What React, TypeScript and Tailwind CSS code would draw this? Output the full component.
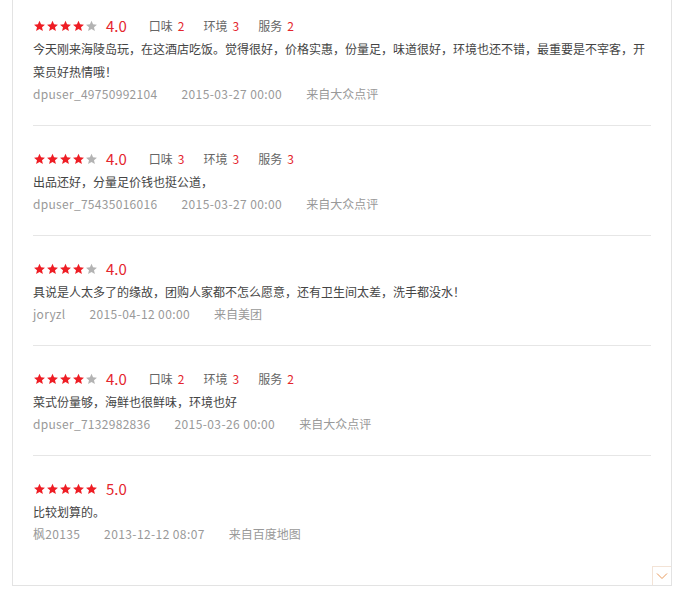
import React from "react";

type Review = {
  score: number;
  taste?: number;
  env?: number;
  service?: number;
  text: string;
  user: string;
  time: string;
  from: string;
};

const reviews: Review[] = [
  {
    score: 4,
    taste: 2,
    env: 3,
    service: 2,
    text: "今天刚来海陵岛玩，在这酒店吃饭。觉得很好，价格实惠，份量足，味道很好，环境也还不错，最重要是不宰客，开菜员好热情哦！",
    user: "dpuser_49750992104",
    time: "2015-03-27 00:00",
    from: "来自大众点评",
  },
  {
    score: 4,
    taste: 3,
    env: 3,
    service: 3,
    text: "出品还好，分量足价钱也挺公道，",
    user: "dpuser_75435016016",
    time: "2015-03-27 00:00",
    from: "来自大众点评",
  },
  {
    score: 4,
    text: "具说是人太多了的缘故，团购人家都不怎么愿意，还有卫生间太差，洗手都没水！",
    user: "joryzl",
    time: "2015-04-12 00:00",
    from: "来自美团",
  },
  {
    score: 4,
    taste: 2,
    env: 3,
    service: 2,
    text: "菜式份量够，海鲜也很鲜味，环境也好",
    user: "dpuser_7132982836",
    time: "2015-03-26 00:00",
    from: "来自大众点评",
  },
  {
    score: 5,
    text: "比较划算的。",
    user: "枫20135",
    time: "2013-12-12 08:07",
    from: "来自百度地图",
  },
];

function Star({ on }: { on: boolean }) {
  return (
    <svg width="13" height="12" viewBox="0 0 24 24">
      <path
        d="M12 1.5l3.1 7.2 7.8.6-5.9 5.1 1.8 7.6L12 17.9 5.2 22l1.8-7.6L1.1 9.3l7.8-.6z"
        fill={on ? "#ee1d24" : "#b3b3b3"}
      />
    </svg>
  );
}

function Tag({ label, value }: { label: string; value: number }) {
  return (
    <span className="text-[#666]">
      {label}
      <span className="ml-[5px] text-[#e4252d]">{value}</span>
    </span>
  );
}

export default function App() {
  return (
    <div
      className="bg-white w-[688px] h-[589px]"
      style={{ fontFamily: '"Noto Sans CJK SC", "Microsoft YaHei", sans-serif' }}
    >
      <div className="relative ml-[12px] w-[660px] border-x border-b border-[#e3e3e3] pl-[20px] pr-[20px] pb-[20px]">
        {reviews.map((r, i) => (
          <div
            key={i}
            className={
              (i === 0 ? "pt-[14px] " : "pt-[21px] ") +
              (i < reviews.length - 1 ? "border-b border-[#e6e6e6] " : "") +
              "pb-[21px] text-[12px]"
            }
          >
            <div className="flex items-center h-[23px]">
              <div className="flex">
                {[0, 1, 2, 3, 4].map((s) => (
                  <Star key={s} on={s < r.score} />
                ))}
              </div>
              <span className="ml-[8px] text-[15px] leading-none text-[#e4252d]">
                {r.score.toFixed(1)}
              </span>
              {r.taste !== undefined && (
                <div className="ml-[22px] flex gap-[19px]">
                  <Tag label="口味" value={r.taste} />
                  <Tag label="环境" value={r.env ?? 0} />
                  <Tag label="服务" value={r.service ?? 0} />
                </div>
              )}
            </div>
            <p className="leading-[23px] text-[#444]">{r.text}</p>
            <div className="flex gap-[24px] leading-[21px] text-[#999] text-[12px]">
              <span className="tracking-[0.3px]">{r.user}</span>
              <span className="tracking-[0.4px]">{r.time}</span>
              <span>{r.from}</span>
            </div>
          </div>
        ))}
        <button className="absolute right-0 bottom-0 w-[19px] h-[19px] border-l border-t border-[#f3e3d6] flex items-center justify-center">
          <svg width="12" height="8" viewBox="0 0 12 8">
            <path d="M1 1.5l5 5 5-5" fill="none" stroke="#e99a5c" strokeWidth="1" />
          </svg>
        </button>
      </div>
    </div>
  );
}
